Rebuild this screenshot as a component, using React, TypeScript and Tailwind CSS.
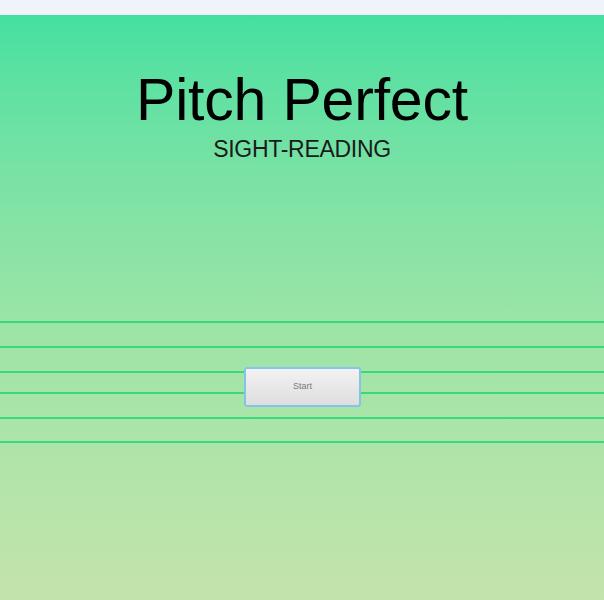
import React from 'react';

const lineGaps = ['mt-0', 'mt-[23px]', 'mt-[23px]', 'mt-[19px]', 'mt-[23px]', 'mt-[22px]'];

export default function App() {
  return (
    <div className="w-full h-[600px] flex flex-col overflow-hidden" style={{ fontFamily: '"Liberation Sans", Arial, sans-serif' }}>
      {/* top strip */}
      <div className="h-[15px] bg-[#f0f3f9] shrink-0" />

      <div className="flex-1 flex flex-col bg-gradient-to-b from-[#44e0a1] via-[#9ee4a7] via-55% to-[#c3e4ab]">
        {/* Header */}
        <div className="flex flex-col items-center pt-[53px]">
          <h1 className="text-[59px] leading-[64px] text-black tracking-[-0.2px]">Pitch Perfect</h1>
          <p className="text-[23px] leading-[26px] text-[#1a1a1a] mt-[4px] tracking-[-0.3px]">SIGHT-READING</p>
        </div>

        {/* Staff */}
        <div className="relative mt-[159px]">
          {lineGaps.map((gap, i) => (
            <div key={i} className={`h-[2px] bg-[#38da78] ${gap}`} />
          ))}
          <button className="absolute left-[244px] top-[46px] w-[117px] h-[40px] rounded-[3px] border-2 border-[#86c3ea] bg-gradient-to-b from-[#f2f2f2] to-[#dedede] text-[9px] text-[#7a7a7a]">
            Start
          </button>
        </div>
      </div>
    </div>
  );
}
